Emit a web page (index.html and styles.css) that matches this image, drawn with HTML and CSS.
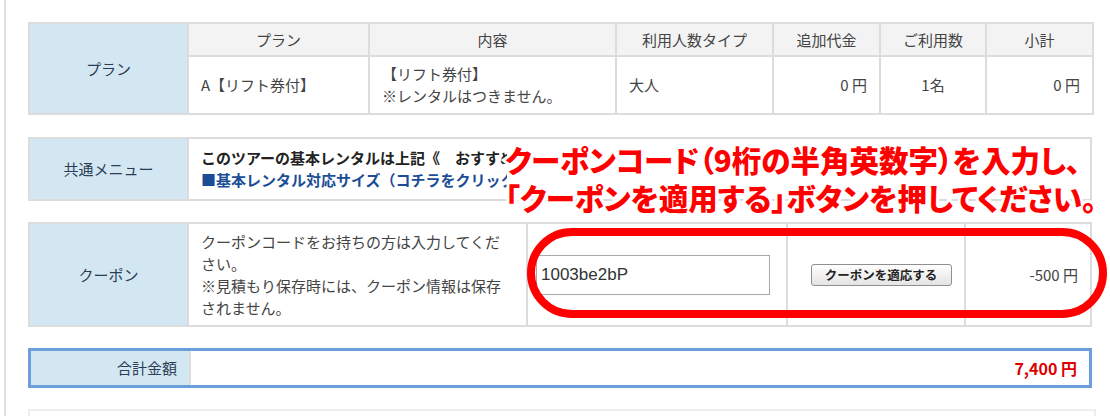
FILE: index.html
```html
<!DOCTYPE html>
<html lang="ja">
<head>
<meta charset="utf-8">
<title>クーポン</title>
<link rel="stylesheet" href="styles.css">
</head>
<body>
<div class="page">
  <div class="content">
    <table class="tbl plan">
      <colgroup>
        <col class="c-label"><col class="c-plan"><col class="c-desc"><col class="c-type"><col class="c-add"><col class="c-num"><col class="c-sub">
      </colgroup>
      <tr class="head-row">
        <th class="label" rowspan="2">プラン</th>
        <th>プラン</th>
        <th>内容</th>
        <th>利用人数タイプ</th>
        <th>追加代金</th>
        <th>ご利用数</th>
        <th>小計</th>
      </tr>
      <tr class="body-row">
        <td class="left">A【リフト券付】</td>
        <td class="left">【リフト券付】<br>※レンタルはつきません。</td>
        <td class="left">大人</td>
        <td class="right">0 円</td>
        <td class="center">1名</td>
        <td class="right">0 円</td>
      </tr>
    </table>

    <table class="tbl common">
      <colgroup><col class="c-label"><col></colgroup>
      <tr>
        <th class="label">共通メニュー</th>
        <td class="left common-text">
          <span class="clip strong">このツアーの基本レンタルは上記《　おすすめマーク　》がついたものです。</span>
          <span class="clip strong link">■基本レンタル対応サイズ（コチラをクリック）</span>
        </td>
      </tr>
    </table>

    <table class="tbl coupon">
      <colgroup><col class="c-label"><col class="c-cdesc"><col class="c-input"><col class="c-btn"><col></colgroup>
      <tr>
        <th class="label">クーポン</th>
        <td class="left cdesc">クーポンコードをお持ちの方は入力してください。<br>※見積もり保存時には、クーポン情報は保存されません。</td>
        <td class="input-cell"><input class="code" type="text" value="1003be2bP"></td>
        <td class="center btn-cell"><button class="apply" type="button">クーポンを適応する</button></td>
        <td class="right">-500 円</td>
      </tr>
    </table>

    <table class="tbl total">
      <colgroup><col class="c-tlabel"><col></colgroup>
      <tr>
        <th class="label tlabel">合計金額</th>
        <td class="right amount">7,400 円</td>
      </tr>
    </table>

    <div class="next-box"></div>

    <div class="callout">
      <div class="note">クーポンコード（9桁の半角英数字）を入力し、<br>「クーポンを適用する」ボタンを押してください。</div>
      <div class="ring"></div>
    </div>
  </div>
</div>
</body>
</html>
```

FILE: styles.css
```css
html, body {
  margin: 0;
  padding: 0;
  background: #fff;
}
body {
  font-family: "Noto Sans CJK JP", "Noto Sans", sans-serif;
  font-size: 15px;
  color: #444;
}
.page {
  padding-left: 4px;
  height: 416px;
  overflow: hidden;
}
.content {
  position: relative;
  border-left: 2px solid #e3e0db;
  padding: 22px 18px 0 22px;
  height: 500px;
}
.tbl {
  width: 1064px;
  table-layout: fixed;
  border-collapse: separate;
  border-spacing: 0;
  border-top: 2px solid #dcdcdc;
  border-left: 2px solid #dcdcdc;
}
.tbl th, .tbl td {
  border-right: 2px solid #dcdcdc;
  border-bottom: 2px solid #dcdcdc;
  padding: 0 12px;
  font-weight: normal;
  line-height: 22px;
}
.tbl th {
  background: #f3f3f3;
  text-align: center;
  color: #444;
}
.tbl th.label {
  background: #d3e7f3;
  color: #2b3d55;
}
.c-label { width: 159px; }
.c-plan { width: 181px; }
.c-desc { width: 247px; }
.c-type { width: 157px; }
.c-add { width: 107px; }
.c-num { width: 106px; }
.c-sub { width: 107px; }
.c-cdesc { width: 339px; }
.c-input { width: 260px; }
.c-btn { width: 178px; }
.c-tlabel { width: 160px; }

.left { text-align: left; }
.right { text-align: right; }
.center { text-align: center; }

.plan .head-row { height: 33px; }
.plan .body-row { height: 58px; }
.plan .body-row td { background: #fff; }

.common { margin-top: 22px; }
.common tr { height: 62px; }
.common-text { line-height: 21px; }
.clip {
  display: block;
  width: 306px;
  white-space: nowrap;
  overflow: hidden;
}
.strong { font-weight: bold; color: #222; }
.strong.link { color: #1b4d96; }

.coupon { margin-top: 21px; }
.coupon tr { height: 103px; }
.cdesc { line-height: 23.5px; padding: 4px 24px 4px 13px; }
.tbl td.input-cell { padding: 0 14px 0 8px; }
.code {
  box-sizing: border-box;
  width: 234px;
  height: 40px;
  border: 1px solid #a9a9a9;
  padding: 0 4px;
  font-family: "Liberation Sans", Arial, sans-serif;
  font-size: 17px;
  color: #333;
  background: #fff;
}
.tbl td.btn-cell { padding: 0 4px 0 14px; }
.apply {
  width: 141px;
  height: 22px;
  padding: 0;
  border: 1px solid #8f8f8f;
  border-radius: 3px;
  background: linear-gradient(#fefefe, #e4e4e4);
  font-family: "Noto Sans CJK JP", sans-serif;
  font-size: 12.5px;
  font-weight: bold;
  color: #222;
}

.total {
  margin-top: 21px;
  border: 3px solid #6a9fdc;
}
.total tr { height: 34px; }
.tbl.total th, .tbl.total td { border-bottom: none; }
.tbl.total td { border-right: none; }
.tbl th.tlabel { text-align: right; padding-right: 12px; }
.tbl td.amount {
  color: #dd0000;
  font-weight: bold;
  font-size: 16px;
  padding-right: 12px;
}

.next-box {
  margin-top: 21px;
  width: 1064px;
  height: 40px;
  border: 2px solid #eeeeee;
}

.callout {
  position: absolute;
  left: 0;
  top: 0;
}
.note {
  position: absolute;
  left: 499px;
  top: 140px;
  white-space: nowrap;
  font-family: "Noto Sans CJK JP", sans-serif;
  font-size: 29.5px;
  font-weight: 900;
  line-height: 38px;
  color: #ff0000;
  font-feature-settings: "palt" 1;
  -webkit-text-stroke: 6px #fff;
  paint-order: stroke fill;
}
.ring {
  position: absolute;
  left: 521px;
  top: 228px;
  width: 564px;
  height: 74px;
  border: 8px solid #ff0000;
  border-radius: 46px;
}
```
